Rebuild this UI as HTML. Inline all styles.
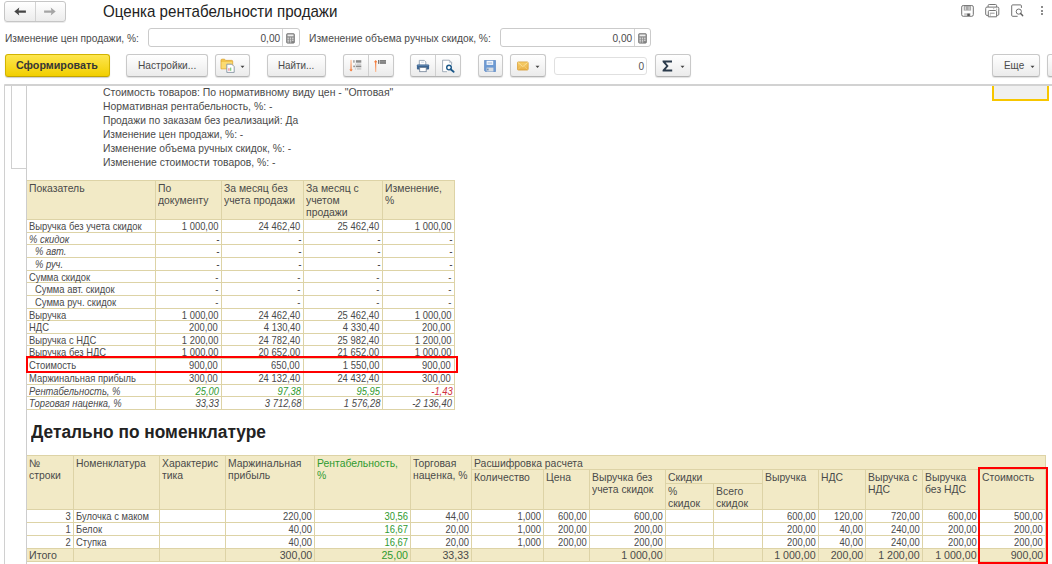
<!DOCTYPE html>
<html><head><meta charset="utf-8"><style>
html,body{margin:0;padding:0;background:#fff;width:1052px;height:564px;overflow:hidden;position:relative;font-family:"Liberation Sans",sans-serif}
.t{position:absolute;white-space:nowrap}
.r{position:absolute}
</style></head><body>
<div class="r" style="left:4px;top:1px;width:62px;height:21px;border:1px solid #c6c6c6;border-radius:3px;background:linear-gradient(#fff,#ececec);box-sizing:border-box;box-shadow:0 1px 0 rgba(0,0,0,0.08)"></div>
<div class="r" style="left:35px;top:2px;width:1px;height:19px;background:#d2d2d2"></div>
<svg class="r" style="left:13px;top:5px" width="14" height="12" viewBox="0 0 14 12"><path d="M1.3 6.6 L6.3 2.6 L5.6 5.5 L12.9 5.5 L12.9 7.7 L5.6 7.7 L6.3 10.6 Z" fill="#454545"/></svg>
<svg class="r" style="left:43px;top:5px" width="14" height="12" viewBox="0 0 14 12"><path d="M12.7 6.6 L7.7 2.6 L8.4 5.5 L1.1 5.5 L1.1 7.7 L8.4 7.7 L7.7 10.6 Z" fill="#a5a5a5"/></svg>
<div class="t" style="left:103px;top:1.05px;font-size:16.6px;line-height:22px;color:#222;font-weight:normal;font-style:normal;transform:scaleX(0.9115);transform-origin:left center;">Оценка рентабельности продажи</div>
<svg class="r" style="left:960px;top:4px" width="15" height="14" viewBox="0 0 15 14">
<rect x="1.7" y="1.5" width="11.6" height="10.8" rx="1.6" fill="none" stroke="#707070" stroke-width="1"/>
<rect x="3.7" y="1.8" width="7.4" height="4.8" fill="#a8a8a8"/>
<rect x="5" y="2.6" width="1" height="3.2" fill="#d8d8d8"/><rect x="8.6" y="2.6" width="1" height="3.2" fill="#d8d8d8"/>
<rect x="4.2" y="9.2" width="6.4" height="3" fill="#c8c8c8"/>
<rect x="7.3" y="9.6" width="2.5" height="2.4" fill="#555"/>
</svg>
<svg class="r" style="left:985px;top:4px" width="15" height="14" viewBox="0 0 15 14">
<path d="M3.1 3 V1.6 Q3.1 0.5 4.2 0.5 H10.5 Q11.6 0.5 11.6 1.6 V3" fill="none" stroke="#747474" stroke-width="1"/>
<path d="M3.3 11.4 H1.9 Q0.7 11.4 0.7 10.2 V4.3 Q0.7 3.1 1.9 3.1 H12.6 Q13.8 3.1 13.8 4.3 V10.2 Q13.8 11.4 12.6 11.4 H11.4" fill="none" stroke="#747474" stroke-width="1"/>
<path d="M3.3 12.8 V7.6 Q3.3 6.5 4.4 6.5 H10.4 Q11.6 6.5 11.6 7.6 V12.8 Z" fill="#fff" stroke="#747474" stroke-width="1"/>
<path d="M5 9.2 H9.6" stroke="#8a8a8a" stroke-width="0.9"/><path d="M5.3 9.2 V12" stroke="#aaa" stroke-width="0.7"/>
<rect x="8.2" y="4.3" width="1" height="0.9" fill="#999"/><rect x="11.1" y="4.7" width="1" height="0.9" fill="#888"/>
</svg>
<svg class="r" style="left:1010px;top:4px" width="15" height="14" viewBox="0 0 15 14">
<path d="M7.6 12.3 H2.7 Q1.7 12.3 1.7 11.3 V1.9 Q1.7 0.9 2.7 0.9 H10.4 Q11.4 0.9 11.4 1.9 V3.9" fill="none" stroke="#707070" stroke-width="1"/>
<circle cx="8.8" cy="7.6" r="2.6" fill="none" stroke="#707070" stroke-width="1"/>
<line x1="10.6" y1="9.5" x2="12.6" y2="11.6" stroke="#606060" stroke-width="1.5" stroke-linecap="round"/>
</svg>
<div class="r" style="left:1041px;top:6px;width:2px;height:2px;background:#666;border-radius:1px"></div>
<div class="r" style="left:1041px;top:9.5px;width:2px;height:2px;background:#666;border-radius:1px"></div>
<div class="r" style="left:1041px;top:13px;width:2px;height:2px;background:#666;border-radius:1px"></div>
<div class="t" style="left:5px;top:31.22px;font-size:10.9px;line-height:14px;color:#4a4a4a;font-weight:normal;font-style:normal;transform:scaleX(0.9354);transform-origin:left center;">Изменение цен продажи, %:</div>
<div class="r" style="left:148px;top:28px;width:152px;height:19px;border:1px solid #cbcbcb;border-radius:3px;background:#fff;box-sizing:border-box"></div>
<div class="r" style="left:282px;top:29px;width:1px;height:17px;background:#d4d4d4"></div>
<svg class="r" style="left:286px;top:33px" width="10" height="11" viewBox="0 0 10 11">
<rect x="0.5" y="0.6" width="8" height="9.6" rx="1.2" fill="#8a8a8a" stroke="#6a6a6a" stroke-width="0.6"/>
<rect x="1.5" y="1.5" width="6" height="1.8" fill="#eeeeee"/>
<g fill="#e6e6e6"><rect x="1.5" y="4.6" width="1.4" height="1.2"/><rect x="3.8" y="4.6" width="1.4" height="1.2"/><rect x="6.1" y="4.6" width="1.4" height="1.2"/>
<rect x="1.5" y="6.6" width="1.4" height="1.2"/><rect x="3.8" y="6.6" width="1.4" height="1.2"/><rect x="6.1" y="6.6" width="1.4" height="1.2"/>
<rect x="1.5" y="8.4" width="1.4" height="1.0"/><rect x="3.8" y="8.4" width="1.4" height="1.0"/></g>
</svg>
<div class="t" style="right:772px;top:31.22px;font-size:10.9px;line-height:14px;color:#4a4a4a;font-weight:normal;font-style:normal;text-align:right;transform:scaleX(0.9300);transform-origin:right center;">0,00</div>
<div class="t" style="left:309px;top:31.22px;font-size:10.9px;line-height:14px;color:#4a4a4a;font-weight:normal;font-style:normal;transform:scaleX(0.9443);transform-origin:left center;">Изменение объема ручных скидок, %:</div>
<div class="r" style="left:500px;top:28px;width:151px;height:19px;border:1px solid #cbcbcb;border-radius:3px;background:#fff;box-sizing:border-box"></div>
<div class="r" style="left:634px;top:29px;width:1px;height:17px;background:#d4d4d4"></div>
<svg class="r" style="left:638px;top:33px" width="10" height="11" viewBox="0 0 10 11">
<rect x="0.5" y="0.6" width="8" height="9.6" rx="1.2" fill="#8a8a8a" stroke="#6a6a6a" stroke-width="0.6"/>
<rect x="1.5" y="1.5" width="6" height="1.8" fill="#eeeeee"/>
<g fill="#e6e6e6"><rect x="1.5" y="4.6" width="1.4" height="1.2"/><rect x="3.8" y="4.6" width="1.4" height="1.2"/><rect x="6.1" y="4.6" width="1.4" height="1.2"/>
<rect x="1.5" y="6.6" width="1.4" height="1.2"/><rect x="3.8" y="6.6" width="1.4" height="1.2"/><rect x="6.1" y="6.6" width="1.4" height="1.2"/>
<rect x="1.5" y="8.4" width="1.4" height="1.0"/><rect x="3.8" y="8.4" width="1.4" height="1.0"/></g>
</svg>
<div class="t" style="right:420px;top:31.22px;font-size:10.9px;line-height:14px;color:#4a4a4a;font-weight:normal;font-style:normal;text-align:right;transform:scaleX(0.9300);transform-origin:right center;">0,00</div>
<div class="r" style="left:5px;top:54px;width:105px;height:23px;border:1px solid #d2b400;border-bottom-color:#c2a400;border-radius:3px;background:linear-gradient(#fde650,#f2cf00);box-sizing:border-box;box-shadow:0 1px 1px rgba(0,0,0,0.2)"></div>
<div class="t" style="left:16px;top:58.22px;font-size:10.9px;line-height:14px;color:#363636;font-weight:bold;font-style:normal;transform:scaleX(0.9852);transform-origin:left center;">Сформировать</div>
<div class="r" style="left:126px;top:54px;width:82px;height:23px;border:1px solid #c9c9c9;border-bottom-color:#b5b5b5;border-radius:3px;background:linear-gradient(#ffffff,#ebebeb);box-sizing:border-box;box-shadow:0 1px 1px rgba(0,0,0,0.12)"></div>
<div class="t" style="left:137.7px;top:58.22px;font-size:10.9px;line-height:14px;color:#4a4a4a;font-weight:normal;font-style:normal;transform:scaleX(0.9324);transform-origin:left center;">Настройки...</div>
<div class="r" style="left:215px;top:54px;width:35px;height:23px;border:1px solid #c9c9c9;border-bottom-color:#b5b5b5;border-radius:3px;background:linear-gradient(#ffffff,#ebebeb);box-sizing:border-box;box-shadow:0 1px 1px rgba(0,0,0,0.12)"></div>
<svg class="r" style="left:220px;top:58px" width="16" height="16" viewBox="0 0 16 16">
<path d="M1 2.2 Q1 1.2 2 1.2 H4.6 L5.6 2.4 H11.8 Q12.7 2.4 12.7 3.3 V10.8 H1 Z" fill="#f3c54a" stroke="#dca22e" stroke-width="0.8"/>
<rect x="1.5" y="4" width="10.7" height="6.4" fill="#fbdb73"/>
<path d="M6.8 6.2 H11.8 L14.2 8.6 V14.4 H6.8 Z" fill="#fff" stroke="#8593a3" stroke-width="0.9"/>
<rect x="8.3" y="10.2" width="1.3" height="2.6" fill="#f28c8c"/><rect x="10" y="9.6" width="1.3" height="3.2" fill="#86cf86"/>
</svg>
<svg class="r" style="left:240px;top:64.5px" width="5" height="4" viewBox="0 0 5 4"><path d="M0.5 0.8 H4.5 L2.5 2.9 Z" fill="#444"/></svg>
<div class="r" style="left:267px;top:54px;width:59px;height:23px;border:1px solid #c9c9c9;border-bottom-color:#b5b5b5;border-radius:3px;background:linear-gradient(#ffffff,#ebebeb);box-sizing:border-box;box-shadow:0 1px 1px rgba(0,0,0,0.12)"></div>
<div class="t" style="left:278.4px;top:58.22px;font-size:10.9px;line-height:14px;color:#4a4a4a;font-weight:normal;font-style:normal;transform:scaleX(0.9008);transform-origin:left center;">Найти...</div>
<div class="r" style="left:343px;top:54px;width:51px;height:23px;border:1px solid #c9c9c9;border-bottom-color:#b5b5b5;border-radius:3px;background:linear-gradient(#ffffff,#ebebeb);box-sizing:border-box;box-shadow:0 1px 1px rgba(0,0,0,0.12)"></div>
<div class="r" style="left:368px;top:55px;width:1px;height:21px;background:#cfcfcf"></div>
<svg class="r" style="left:346px;top:57px" width="18" height="17" viewBox="0 0 18 17">
<defs><linearGradient id="og1" x1="0" y1="0" x2="0" y2="1"><stop offset="0" stop-color="#fbc9a8"/><stop offset="1" stop-color="#f37d3e"/></linearGradient>
<linearGradient id="og2" x1="0" y1="1" x2="0" y2="0"><stop offset="0" stop-color="#fbc2a0"/><stop offset="1" stop-color="#f37d3e"/></linearGradient></defs>
<rect x="4.4" y="2.9" width="1.3" height="10.5" fill="url(#og1)"/>
<path d="M3.3 12.4 H6.8 L5.05 14.6 Z" fill="#f37a38"/>
<rect x="7.2" y="3.2" width="1.4" height="2.5" fill="#9a9a9a"/><rect x="9.9" y="3.2" width="5.4" height="2.5" fill="#8a8a8a"/>
<rect x="9.3" y="6.4" width="0.6" height="1.9" fill="#bbb"/><rect x="10.5" y="6.4" width="4.8" height="1.9" fill="#cfcfcf"/>
<rect x="7.2" y="8.6" width="2" height="1.6" fill="#999"/><rect x="9.9" y="8.6" width="5.4" height="1.6" fill="#8a8a8a"/>
<rect x="8.9" y="10.5" width="0.6" height="2.3" fill="#bbb"/><rect x="10.8" y="10.5" width="4.5" height="2.3" fill="#cfcfcf"/>
</svg>
<svg class="r" style="left:371px;top:57px" width="18" height="17" viewBox="0 0 18 17">
<rect x="4" y="4.5" width="1.3" height="10.5" fill="url(#og2)"/>
<path d="M2.9 5.3 H6.4 L4.65 3 Z" fill="#f37a38"/>
<rect x="7" y="3" width="1" height="3.9" fill="#777"/><rect x="8.6" y="3" width="6.4" height="3.9" fill="#7e7e7e"/>
<rect x="8.6" y="4.6" width="6.4" height="0.6" fill="#a5a5a5"/>
</svg>
<div class="r" style="left:410px;top:54px;width:51px;height:23px;border:1px solid #c9c9c9;border-bottom-color:#b5b5b5;border-radius:3px;background:linear-gradient(#ffffff,#ebebeb);box-sizing:border-box;box-shadow:0 1px 1px rgba(0,0,0,0.12)"></div>
<div class="r" style="left:435px;top:55px;width:1px;height:21px;background:#cfcfcf"></div>
<svg class="r" style="left:416px;top:59px" width="14" height="14" viewBox="0 0 14 14">
<path d="M3.3 6 V1.4 H8.3 L9.8 2.9 V6" fill="#fff" stroke="#8595a8" stroke-width="0.8"/>
<path d="M5 3.2 H8" stroke="#b8c8dc" stroke-width="0.7"/>
<path d="M0.9 6.3 Q0.9 5.5 1.8 5.5 H12.2 Q13.1 5.5 13.1 6.3 V9.6 Q13.1 10.6 12.1 10.6 H1.9 Q0.9 10.6 0.9 9.6 Z" fill="#3c6592"/>
<rect x="1.5" y="5.9" width="11" height="1" fill="#5a82ad"/>
<rect x="3.7" y="8.6" width="6.5" height="4.1" fill="#fff" stroke="#6e7f94" stroke-width="0.8"/>
</svg>
<svg class="r" style="left:441px;top:59px" width="14" height="14" viewBox="0 0 14 14">
<path d="M6 12.7 H1.6 V1.2 H8.4 L10.6 3.4 V5.8" fill="#fff" stroke="#8a98a8" stroke-width="0.8"/>
<path d="M8.4 1.2 V3.4 H10.6" fill="none" stroke="#9aa8b8" stroke-width="0.6"/>
<circle cx="8" cy="8.6" r="2.3" fill="#fff" stroke="#1b5889" stroke-width="1.4"/>
<line x1="9.6" y1="10.2" x2="12.6" y2="12.8" stroke="#1b5889" stroke-width="1.8" stroke-linecap="round"/>
</svg>
<div class="r" style="left:478px;top:54px;width:25px;height:23px;border:1px solid #c9c9c9;border-bottom-color:#b5b5b5;border-radius:3px;background:linear-gradient(#ffffff,#ebebeb);box-sizing:border-box;box-shadow:0 1px 1px rgba(0,0,0,0.12)"></div>
<svg class="r" style="left:484px;top:60px" width="12" height="12" viewBox="0 0 12 12">
<path d="M0.4 0.6 Q0.4 0.3 0.7 0.3 H11.3 Q11.7 0.3 11.7 0.7 V11.3 Q11.7 11.7 11.3 11.7 H1.6 L0.4 10.5 Z" fill="#6d9ad3" stroke="#5682bd" stroke-width="0.6"/>
<rect x="2.6" y="0.8" width="6.6" height="4.1" fill="#f4f7fc"/>
<rect x="3.6" y="2.0" width="4.6" height="0.6" fill="#a9bedc"/><rect x="3.6" y="3.2" width="4.6" height="0.6" fill="#a9bedc"/>
<rect x="2.6" y="7.6" width="6.8" height="3.9" fill="#d9dde2"/>
<rect x="3.2" y="8.6" width="1.3" height="1.8" fill="#5a7fae"/>
</svg>
<div class="r" style="left:510px;top:54px;width:36px;height:23px;border:1px solid #c9c9c9;border-bottom-color:#b5b5b5;border-radius:3px;background:linear-gradient(#ffffff,#ebebeb);box-sizing:border-box;box-shadow:0 1px 1px rgba(0,0,0,0.12)"></div>
<svg class="r" style="left:517px;top:61px" width="12" height="10" viewBox="0 0 12 10">
<defs><linearGradient id="env" x1="0" y1="0" x2="0" y2="1"><stop offset="0" stop-color="#f7cf6a"/><stop offset="1" stop-color="#eab045"/></linearGradient></defs>
<rect x="0.4" y="0.9" width="10.8" height="8.2" rx="1" fill="url(#env)" stroke="#d69a2c" stroke-width="0.7"/>
<path d="M0.8 1.4 L5.8 5.6 L10.8 1.4" fill="none" stroke="#fbe3a0" stroke-width="0.8"/>
<path d="M0.9 8.6 L4.3 5.2 M10.7 8.6 L7.3 5.2" fill="none" stroke="#f5d488" stroke-width="0.6"/>
</svg>
<svg class="r" style="left:535px;top:64.5px" width="5" height="4" viewBox="0 0 5 4"><path d="M0.5 0.8 H4.5 L2.5 2.9 Z" fill="#444"/></svg>
<div class="r" style="left:554px;top:57px;width:93px;height:18px;border:1px solid #e0e0e0;border-radius:3px;background:#fff;box-sizing:border-box"></div>
<div class="t" style="right:408px;top:59.02px;font-size:10.9px;line-height:14px;color:#555;font-weight:normal;font-style:normal;text-align:right;transform:scaleX(0.9300);transform-origin:right center;">0</div>
<div class="r" style="left:655px;top:54px;width:36px;height:23px;border:1px solid #c9c9c9;border-bottom-color:#b5b5b5;border-radius:3px;background:linear-gradient(#ffffff,#ebebeb);box-sizing:border-box;box-shadow:0 1px 1px rgba(0,0,0,0.12)"></div>
<svg class="r" style="left:662px;top:60px" width="11" height="12" viewBox="0 0 11 12">
<path d="M0.6 0.6 H10 V2.6 H3.6 L6.6 6 L3.6 9.4 H10.2 V11.4 H0.6 V10 L4.2 6 L0.6 2 Z" fill="#2b3b4b"/>
</svg>
<svg class="r" style="left:680px;top:64.5px" width="5" height="4" viewBox="0 0 5 4"><path d="M0.5 0.8 H4.5 L2.5 2.9 Z" fill="#444"/></svg>
<div class="r" style="left:992px;top:54px;width:48px;height:23px;border:1px solid #c9c9c9;border-bottom-color:#b5b5b5;border-radius:3px;background:linear-gradient(#ffffff,#ebebeb);box-sizing:border-box;box-shadow:0 1px 1px rgba(0,0,0,0.12)"></div>
<div class="t" style="left:1003.8px;top:58.22px;font-size:10.9px;line-height:14px;color:#4a4a4a;font-weight:normal;font-style:normal;transform:scaleX(0.9108);transform-origin:left center;">Еще</div>
<svg class="r" style="left:1030px;top:64.5px" width="5" height="4" viewBox="0 0 5 4"><path d="M0.5 0.8 H4.5 L2.5 2.9 Z" fill="#444"/></svg>
<div class="r" style="left:1047px;top:54px;width:10px;height:23px;border:1px solid #c9c9c9;border-bottom-color:#b5b5b5;border-radius:3px;background:linear-gradient(#ffffff,#ebebeb);box-sizing:border-box;box-shadow:0 1px 1px rgba(0,0,0,0.12)"></div>
<div class="r" style="left:4px;top:84px;width:1060px;height:2px;background:#d2d2d2;border-top-left-radius:1px"></div>
<div class="r" style="left:4px;top:86px;width:1px;height:478px;background:#d0d0d0"></div>
<div class="r" style="left:11px;top:86px;width:1px;height:83px;background:#d0d0d0"></div>
<div class="r" style="left:11px;top:168px;width:15px;height:1px;background:#d0d0d0"></div>
<div class="r" style="left:992px;top:86px;width:57px;height:15px;border:2px solid #f7c600;border-top:none;background:#f0f0f0;box-sizing:border-box"></div>
<div class="t" style="left:102.5px;top:85.22px;font-size:10.9px;line-height:14px;color:#4a4a4a;font-weight:normal;font-style:normal;transform:scaleX(0.9589);transform-origin:left center;">Стоимость товаров: По нормативному виду цен - "Оптовая"</div>
<div class="t" style="left:102.5px;top:99.17px;font-size:10.9px;line-height:14px;color:#4a4a4a;font-weight:normal;font-style:normal;transform:scaleX(0.9535);transform-origin:left center;">Нормативная рентабельность, %: -</div>
<div class="t" style="left:102.5px;top:113.12px;font-size:10.9px;line-height:14px;color:#4a4a4a;font-weight:normal;font-style:normal;transform:scaleX(0.9448);transform-origin:left center;">Продажи по заказам без реализаций: Да</div>
<div class="t" style="left:102.5px;top:127.07px;font-size:10.9px;line-height:14px;color:#4a4a4a;font-weight:normal;font-style:normal;transform:scaleX(0.9359);transform-origin:left center;">Изменение цен продажи, %: -</div>
<div class="t" style="left:102.5px;top:141.02px;font-size:10.9px;line-height:14px;color:#4a4a4a;font-weight:normal;font-style:normal;transform:scaleX(0.9439);transform-origin:left center;">Изменение объема ручных скидок, %: -</div>
<div class="t" style="left:102.5px;top:154.97px;font-size:10.9px;line-height:14px;color:#4a4a4a;font-weight:normal;font-style:normal;transform:scaleX(0.9522);transform-origin:left center;">Изменение стоимости товаров, %: -</div>
<div class="r" style="left:26px;top:180px;width:428px;height:39px;background:#f2eac6"></div>
<div class="r" style="left:26px;top:180px;width:429px;height:1px;background:#ddd3a6"></div>
<div class="r" style="left:26px;top:219px;width:429px;height:1px;background:#ddd3a6"></div>
<div class="r" style="left:26px;top:232px;width:429px;height:1px;background:#ddd3a6"></div>
<div class="r" style="left:26px;top:244px;width:429px;height:1px;background:#ddd3a6"></div>
<div class="r" style="left:26px;top:257px;width:429px;height:1px;background:#ddd3a6"></div>
<div class="r" style="left:26px;top:270px;width:429px;height:1px;background:#ddd3a6"></div>
<div class="r" style="left:26px;top:282px;width:429px;height:1px;background:#ddd3a6"></div>
<div class="r" style="left:26px;top:295px;width:429px;height:1px;background:#ddd3a6"></div>
<div class="r" style="left:26px;top:308px;width:429px;height:1px;background:#ddd3a6"></div>
<div class="r" style="left:26px;top:320px;width:429px;height:1px;background:#ddd3a6"></div>
<div class="r" style="left:26px;top:333px;width:429px;height:1px;background:#ddd3a6"></div>
<div class="r" style="left:26px;top:345px;width:429px;height:1px;background:#ddd3a6"></div>
<div class="r" style="left:26px;top:358px;width:429px;height:1px;background:#ddd3a6"></div>
<div class="r" style="left:26px;top:371px;width:429px;height:1px;background:#ddd3a6"></div>
<div class="r" style="left:26px;top:384px;width:429px;height:1px;background:#ddd3a6"></div>
<div class="r" style="left:26px;top:396px;width:429px;height:1px;background:#ddd3a6"></div>
<div class="r" style="left:26px;top:409px;width:429px;height:1px;background:#ddd3a6"></div>
<div class="r" style="left:26px;top:180px;width:1px;height:230px;background:#ddd3a6"></div>
<div class="r" style="left:155px;top:180px;width:1px;height:230px;background:#ddd3a6"></div>
<div class="r" style="left:221px;top:180px;width:1px;height:230px;background:#ddd3a6"></div>
<div class="r" style="left:303px;top:180px;width:1px;height:230px;background:#ddd3a6"></div>
<div class="r" style="left:382px;top:180px;width:1px;height:230px;background:#ddd3a6"></div>
<div class="r" style="left:454px;top:180px;width:1px;height:230px;background:#ddd3a6"></div>
<div class="t" style="left:29px;top:180.82px;font-size:10.9px;line-height:14px;color:#4a4a4a;font-weight:normal;font-style:normal;transform:scaleX(0.9550);transform-origin:left center;">Показатель</div>
<div class="t" style="left:158px;top:180.82px;font-size:10.9px;line-height:14px;color:#4a4a4a;font-weight:normal;font-style:normal;transform:scaleX(0.9550);transform-origin:left center;">По</div>
<div class="t" style="left:158px;top:192.72px;font-size:10.9px;line-height:14px;color:#4a4a4a;font-weight:normal;font-style:normal;transform:scaleX(0.9550);transform-origin:left center;">документу</div>
<div class="t" style="left:224px;top:180.82px;font-size:10.9px;line-height:14px;color:#4a4a4a;font-weight:normal;font-style:normal;transform:scaleX(0.9550);transform-origin:left center;">За месяц без</div>
<div class="t" style="left:224px;top:192.72px;font-size:10.9px;line-height:14px;color:#4a4a4a;font-weight:normal;font-style:normal;transform:scaleX(0.9550);transform-origin:left center;">учета продажи</div>
<div class="t" style="left:306px;top:180.82px;font-size:10.9px;line-height:14px;color:#4a4a4a;font-weight:normal;font-style:normal;transform:scaleX(0.9550);transform-origin:left center;">За месяц с</div>
<div class="t" style="left:306px;top:192.72px;font-size:10.9px;line-height:14px;color:#4a4a4a;font-weight:normal;font-style:normal;transform:scaleX(0.9550);transform-origin:left center;">учетом</div>
<div class="t" style="left:306px;top:204.62px;font-size:10.9px;line-height:14px;color:#4a4a4a;font-weight:normal;font-style:normal;transform:scaleX(0.9550);transform-origin:left center;">продажи</div>
<div class="t" style="left:385px;top:180.82px;font-size:10.9px;line-height:14px;color:#4a4a4a;font-weight:normal;font-style:normal;transform:scaleX(0.9550);transform-origin:left center;">Изменение,</div>
<div class="t" style="left:385px;top:192.72px;font-size:10.9px;line-height:14px;color:#4a4a4a;font-weight:normal;font-style:normal;transform:scaleX(0.9550);transform-origin:left center;">%</div>
<div class="t" style="left:29px;top:219.60px;font-size:10.4px;line-height:14px;color:#4a4a4a;font-weight:normal;font-style:normal;transform:scaleX(0.9050);transform-origin:left center;">Выручка без учета скидок</div>
<div class="t" style="right:834px;top:219.60px;font-size:10.4px;line-height:14px;color:#4a4a4a;font-weight:normal;font-style:normal;text-align:right;transform:scaleX(0.9050);transform-origin:right center;">1 000,00</div>
<div class="t" style="right:752px;top:219.60px;font-size:10.4px;line-height:14px;color:#4a4a4a;font-weight:normal;font-style:normal;text-align:right;transform:scaleX(0.9050);transform-origin:right center;">24 462,40</div>
<div class="t" style="right:673px;top:219.60px;font-size:10.4px;line-height:14px;color:#4a4a4a;font-weight:normal;font-style:normal;text-align:right;transform:scaleX(0.9050);transform-origin:right center;">25 462,40</div>
<div class="t" style="right:601px;top:219.60px;font-size:10.4px;line-height:14px;color:#4a4a4a;font-weight:normal;font-style:normal;text-align:right;transform:scaleX(0.9050);transform-origin:right center;">1 000,00</div>
<div class="t" style="left:29px;top:232.60px;font-size:10.4px;line-height:14px;color:#4a4a4a;font-weight:normal;font-style:italic;transform:scaleX(0.9050);transform-origin:left center;">% скидок</div>
<div class="t" style="right:832.8px;top:232.60px;font-size:10.4px;line-height:14px;color:#4a4a4a;font-weight:normal;font-style:italic;text-align:right;transform:scaleX(0.9050);transform-origin:right center;">-</div>
<div class="t" style="right:750.8px;top:232.60px;font-size:10.4px;line-height:14px;color:#4a4a4a;font-weight:normal;font-style:italic;text-align:right;transform:scaleX(0.9050);transform-origin:right center;">-</div>
<div class="t" style="right:671.8px;top:232.60px;font-size:10.4px;line-height:14px;color:#4a4a4a;font-weight:normal;font-style:italic;text-align:right;transform:scaleX(0.9050);transform-origin:right center;">-</div>
<div class="t" style="right:599.8px;top:232.60px;font-size:10.4px;line-height:14px;color:#4a4a4a;font-weight:normal;font-style:italic;text-align:right;transform:scaleX(0.9050);transform-origin:right center;">-</div>
<div class="t" style="left:35px;top:244.60px;font-size:10.4px;line-height:14px;color:#4a4a4a;font-weight:normal;font-style:italic;transform:scaleX(0.9050);transform-origin:left center;">% авт.</div>
<div class="t" style="right:832.8px;top:244.60px;font-size:10.4px;line-height:14px;color:#4a4a4a;font-weight:normal;font-style:italic;text-align:right;transform:scaleX(0.9050);transform-origin:right center;">-</div>
<div class="t" style="right:750.8px;top:244.60px;font-size:10.4px;line-height:14px;color:#4a4a4a;font-weight:normal;font-style:italic;text-align:right;transform:scaleX(0.9050);transform-origin:right center;">-</div>
<div class="t" style="right:671.8px;top:244.60px;font-size:10.4px;line-height:14px;color:#4a4a4a;font-weight:normal;font-style:italic;text-align:right;transform:scaleX(0.9050);transform-origin:right center;">-</div>
<div class="t" style="right:599.8px;top:244.60px;font-size:10.4px;line-height:14px;color:#4a4a4a;font-weight:normal;font-style:italic;text-align:right;transform:scaleX(0.9050);transform-origin:right center;">-</div>
<div class="t" style="left:35px;top:257.60px;font-size:10.4px;line-height:14px;color:#4a4a4a;font-weight:normal;font-style:italic;transform:scaleX(0.9050);transform-origin:left center;">% руч.</div>
<div class="t" style="right:832.8px;top:257.60px;font-size:10.4px;line-height:14px;color:#4a4a4a;font-weight:normal;font-style:italic;text-align:right;transform:scaleX(0.9050);transform-origin:right center;">-</div>
<div class="t" style="right:750.8px;top:257.60px;font-size:10.4px;line-height:14px;color:#4a4a4a;font-weight:normal;font-style:italic;text-align:right;transform:scaleX(0.9050);transform-origin:right center;">-</div>
<div class="t" style="right:671.8px;top:257.60px;font-size:10.4px;line-height:14px;color:#4a4a4a;font-weight:normal;font-style:italic;text-align:right;transform:scaleX(0.9050);transform-origin:right center;">-</div>
<div class="t" style="right:599.8px;top:257.60px;font-size:10.4px;line-height:14px;color:#4a4a4a;font-weight:normal;font-style:italic;text-align:right;transform:scaleX(0.9050);transform-origin:right center;">-</div>
<div class="t" style="left:29px;top:270.60px;font-size:10.4px;line-height:14px;color:#4a4a4a;font-weight:normal;font-style:normal;transform:scaleX(0.9050);transform-origin:left center;">Сумма скидок</div>
<div class="t" style="right:834px;top:270.60px;font-size:10.4px;line-height:14px;color:#4a4a4a;font-weight:normal;font-style:normal;text-align:right;transform:scaleX(0.9050);transform-origin:right center;">-</div>
<div class="t" style="right:752px;top:270.60px;font-size:10.4px;line-height:14px;color:#4a4a4a;font-weight:normal;font-style:normal;text-align:right;transform:scaleX(0.9050);transform-origin:right center;">-</div>
<div class="t" style="right:673px;top:270.60px;font-size:10.4px;line-height:14px;color:#4a4a4a;font-weight:normal;font-style:normal;text-align:right;transform:scaleX(0.9050);transform-origin:right center;">-</div>
<div class="t" style="right:601px;top:270.60px;font-size:10.4px;line-height:14px;color:#4a4a4a;font-weight:normal;font-style:normal;text-align:right;transform:scaleX(0.9050);transform-origin:right center;">-</div>
<div class="t" style="left:35px;top:282.60px;font-size:10.4px;line-height:14px;color:#4a4a4a;font-weight:normal;font-style:normal;transform:scaleX(0.9050);transform-origin:left center;">Сумма авт. скидок</div>
<div class="t" style="right:834px;top:282.60px;font-size:10.4px;line-height:14px;color:#4a4a4a;font-weight:normal;font-style:normal;text-align:right;transform:scaleX(0.9050);transform-origin:right center;">-</div>
<div class="t" style="right:752px;top:282.60px;font-size:10.4px;line-height:14px;color:#4a4a4a;font-weight:normal;font-style:normal;text-align:right;transform:scaleX(0.9050);transform-origin:right center;">-</div>
<div class="t" style="right:673px;top:282.60px;font-size:10.4px;line-height:14px;color:#4a4a4a;font-weight:normal;font-style:normal;text-align:right;transform:scaleX(0.9050);transform-origin:right center;">-</div>
<div class="t" style="right:601px;top:282.60px;font-size:10.4px;line-height:14px;color:#4a4a4a;font-weight:normal;font-style:normal;text-align:right;transform:scaleX(0.9050);transform-origin:right center;">-</div>
<div class="t" style="left:35px;top:295.60px;font-size:10.4px;line-height:14px;color:#4a4a4a;font-weight:normal;font-style:normal;transform:scaleX(0.9050);transform-origin:left center;">Сумма руч. скидок</div>
<div class="t" style="right:834px;top:295.60px;font-size:10.4px;line-height:14px;color:#4a4a4a;font-weight:normal;font-style:normal;text-align:right;transform:scaleX(0.9050);transform-origin:right center;">-</div>
<div class="t" style="right:752px;top:295.60px;font-size:10.4px;line-height:14px;color:#4a4a4a;font-weight:normal;font-style:normal;text-align:right;transform:scaleX(0.9050);transform-origin:right center;">-</div>
<div class="t" style="right:673px;top:295.60px;font-size:10.4px;line-height:14px;color:#4a4a4a;font-weight:normal;font-style:normal;text-align:right;transform:scaleX(0.9050);transform-origin:right center;">-</div>
<div class="t" style="right:601px;top:295.60px;font-size:10.4px;line-height:14px;color:#4a4a4a;font-weight:normal;font-style:normal;text-align:right;transform:scaleX(0.9050);transform-origin:right center;">-</div>
<div class="t" style="left:29px;top:308.60px;font-size:10.4px;line-height:14px;color:#4a4a4a;font-weight:normal;font-style:normal;transform:scaleX(0.9050);transform-origin:left center;">Выручка</div>
<div class="t" style="right:834px;top:308.60px;font-size:10.4px;line-height:14px;color:#4a4a4a;font-weight:normal;font-style:normal;text-align:right;transform:scaleX(0.9050);transform-origin:right center;">1 000,00</div>
<div class="t" style="right:752px;top:308.60px;font-size:10.4px;line-height:14px;color:#4a4a4a;font-weight:normal;font-style:normal;text-align:right;transform:scaleX(0.9050);transform-origin:right center;">24 462,40</div>
<div class="t" style="right:673px;top:308.60px;font-size:10.4px;line-height:14px;color:#4a4a4a;font-weight:normal;font-style:normal;text-align:right;transform:scaleX(0.9050);transform-origin:right center;">25 462,40</div>
<div class="t" style="right:601px;top:308.60px;font-size:10.4px;line-height:14px;color:#4a4a4a;font-weight:normal;font-style:normal;text-align:right;transform:scaleX(0.9050);transform-origin:right center;">1 000,00</div>
<div class="t" style="left:29px;top:320.60px;font-size:10.4px;line-height:14px;color:#4a4a4a;font-weight:normal;font-style:normal;transform:scaleX(0.9050);transform-origin:left center;">НДС</div>
<div class="t" style="right:834px;top:320.60px;font-size:10.4px;line-height:14px;color:#4a4a4a;font-weight:normal;font-style:normal;text-align:right;transform:scaleX(0.9050);transform-origin:right center;">200,00</div>
<div class="t" style="right:752px;top:320.60px;font-size:10.4px;line-height:14px;color:#4a4a4a;font-weight:normal;font-style:normal;text-align:right;transform:scaleX(0.9050);transform-origin:right center;">4 130,40</div>
<div class="t" style="right:673px;top:320.60px;font-size:10.4px;line-height:14px;color:#4a4a4a;font-weight:normal;font-style:normal;text-align:right;transform:scaleX(0.9050);transform-origin:right center;">4 330,40</div>
<div class="t" style="right:601px;top:320.60px;font-size:10.4px;line-height:14px;color:#4a4a4a;font-weight:normal;font-style:normal;text-align:right;transform:scaleX(0.9050);transform-origin:right center;">200,00</div>
<div class="t" style="left:29px;top:333.60px;font-size:10.4px;line-height:14px;color:#4a4a4a;font-weight:normal;font-style:normal;transform:scaleX(0.9050);transform-origin:left center;">Выручка с НДС</div>
<div class="t" style="right:834px;top:333.60px;font-size:10.4px;line-height:14px;color:#4a4a4a;font-weight:normal;font-style:normal;text-align:right;transform:scaleX(0.9050);transform-origin:right center;">1 200,00</div>
<div class="t" style="right:752px;top:333.60px;font-size:10.4px;line-height:14px;color:#4a4a4a;font-weight:normal;font-style:normal;text-align:right;transform:scaleX(0.9050);transform-origin:right center;">24 782,40</div>
<div class="t" style="right:673px;top:333.60px;font-size:10.4px;line-height:14px;color:#4a4a4a;font-weight:normal;font-style:normal;text-align:right;transform:scaleX(0.9050);transform-origin:right center;">25 982,40</div>
<div class="t" style="right:601px;top:333.60px;font-size:10.4px;line-height:14px;color:#4a4a4a;font-weight:normal;font-style:normal;text-align:right;transform:scaleX(0.9050);transform-origin:right center;">1 200,00</div>
<div class="t" style="left:29px;top:345.60px;font-size:10.4px;line-height:14px;color:#4a4a4a;font-weight:normal;font-style:normal;transform:scaleX(0.9050);transform-origin:left center;">Выручка без НДС</div>
<div class="t" style="right:834px;top:345.60px;font-size:10.4px;line-height:14px;color:#4a4a4a;font-weight:normal;font-style:normal;text-align:right;transform:scaleX(0.9050);transform-origin:right center;">1 000,00</div>
<div class="t" style="right:752px;top:345.60px;font-size:10.4px;line-height:14px;color:#4a4a4a;font-weight:normal;font-style:normal;text-align:right;transform:scaleX(0.9050);transform-origin:right center;">20 652,00</div>
<div class="t" style="right:673px;top:345.60px;font-size:10.4px;line-height:14px;color:#4a4a4a;font-weight:normal;font-style:normal;text-align:right;transform:scaleX(0.9050);transform-origin:right center;">21 652,00</div>
<div class="t" style="right:601px;top:345.60px;font-size:10.4px;line-height:14px;color:#4a4a4a;font-weight:normal;font-style:normal;text-align:right;transform:scaleX(0.9050);transform-origin:right center;">1 000,00</div>
<div class="t" style="left:29px;top:358.60px;font-size:10.4px;line-height:14px;color:#4a4a4a;font-weight:normal;font-style:normal;transform:scaleX(0.9050);transform-origin:left center;">Стоимость</div>
<div class="t" style="right:834px;top:358.60px;font-size:10.4px;line-height:14px;color:#4a4a4a;font-weight:normal;font-style:normal;text-align:right;transform:scaleX(0.9050);transform-origin:right center;">900,00</div>
<div class="t" style="right:752px;top:358.60px;font-size:10.4px;line-height:14px;color:#4a4a4a;font-weight:normal;font-style:normal;text-align:right;transform:scaleX(0.9050);transform-origin:right center;">650,00</div>
<div class="t" style="right:673px;top:358.60px;font-size:10.4px;line-height:14px;color:#4a4a4a;font-weight:normal;font-style:normal;text-align:right;transform:scaleX(0.9050);transform-origin:right center;">1 550,00</div>
<div class="t" style="right:601px;top:358.60px;font-size:10.4px;line-height:14px;color:#4a4a4a;font-weight:normal;font-style:normal;text-align:right;transform:scaleX(0.9050);transform-origin:right center;">900,00</div>
<div class="t" style="left:29px;top:371.60px;font-size:10.4px;line-height:14px;color:#4a4a4a;font-weight:normal;font-style:normal;transform:scaleX(0.9050);transform-origin:left center;">Маржинальная прибыль</div>
<div class="t" style="right:834px;top:371.60px;font-size:10.4px;line-height:14px;color:#4a4a4a;font-weight:normal;font-style:normal;text-align:right;transform:scaleX(0.9050);transform-origin:right center;">300,00</div>
<div class="t" style="right:752px;top:371.60px;font-size:10.4px;line-height:14px;color:#4a4a4a;font-weight:normal;font-style:normal;text-align:right;transform:scaleX(0.9050);transform-origin:right center;">24 132,40</div>
<div class="t" style="right:673px;top:371.60px;font-size:10.4px;line-height:14px;color:#4a4a4a;font-weight:normal;font-style:normal;text-align:right;transform:scaleX(0.9050);transform-origin:right center;">24 432,40</div>
<div class="t" style="right:601px;top:371.60px;font-size:10.4px;line-height:14px;color:#4a4a4a;font-weight:normal;font-style:normal;text-align:right;transform:scaleX(0.9050);transform-origin:right center;">300,00</div>
<div class="t" style="left:29px;top:384.60px;font-size:10.4px;line-height:14px;color:#4a4a4a;font-weight:normal;font-style:italic;transform:scaleX(0.9050);transform-origin:left center;">Рентабельность, %</div>
<div class="t" style="right:832.8px;top:384.60px;font-size:10.4px;line-height:14px;color:#2f9a2f;font-weight:normal;font-style:italic;text-align:right;transform:scaleX(0.9050);transform-origin:right center;">25,00</div>
<div class="t" style="right:750.8px;top:384.60px;font-size:10.4px;line-height:14px;color:#2f9a2f;font-weight:normal;font-style:italic;text-align:right;transform:scaleX(0.9050);transform-origin:right center;">97,38</div>
<div class="t" style="right:671.8px;top:384.60px;font-size:10.4px;line-height:14px;color:#2f9a2f;font-weight:normal;font-style:italic;text-align:right;transform:scaleX(0.9050);transform-origin:right center;">95,95</div>
<div class="t" style="right:599.8px;top:384.60px;font-size:10.4px;line-height:14px;color:#d2303c;font-weight:normal;font-style:italic;text-align:right;transform:scaleX(0.9050);transform-origin:right center;">-1,43</div>
<div class="t" style="left:29px;top:396.60px;font-size:10.4px;line-height:14px;color:#4a4a4a;font-weight:normal;font-style:italic;transform:scaleX(0.9050);transform-origin:left center;">Торговая наценка, %</div>
<div class="t" style="right:832.8px;top:396.60px;font-size:10.4px;line-height:14px;color:#4a4a4a;font-weight:normal;font-style:italic;text-align:right;transform:scaleX(0.9050);transform-origin:right center;">33,33</div>
<div class="t" style="right:750.8px;top:396.60px;font-size:10.4px;line-height:14px;color:#4a4a4a;font-weight:normal;font-style:italic;text-align:right;transform:scaleX(0.9050);transform-origin:right center;">3 712,68</div>
<div class="t" style="right:671.8px;top:396.60px;font-size:10.4px;line-height:14px;color:#4a4a4a;font-weight:normal;font-style:italic;text-align:right;transform:scaleX(0.9050);transform-origin:right center;">1 576,28</div>
<div class="t" style="right:599.8px;top:396.60px;font-size:10.4px;line-height:14px;color:#4a4a4a;font-weight:normal;font-style:italic;text-align:right;transform:scaleX(0.9050);transform-origin:right center;">-2 136,40</div>
<div class="t" style="left:30.5px;top:421.20px;font-size:17.6px;line-height:23px;color:#222;font-weight:bold;font-style:normal;transform:scaleX(0.9833);transform-origin:left center;">Детально по номенклатуре</div>
<div class="r" style="left:26px;top:455px;width:1019px;height:54px;background:#f2eac6"></div>
<div class="r" style="left:26px;top:548px;width:1019px;height:13px;background:#f2eac6"></div>
<div class="r" style="left:26px;top:455px;width:1020px;height:1px;background:#ddd3a6"></div>
<div class="r" style="left:471px;top:469px;width:575px;height:1px;background:#ddd3a6"></div>
<div class="r" style="left:665px;top:483px;width:98px;height:1px;background:#ddd3a6"></div>
<div class="r" style="left:26px;top:509px;width:1020px;height:1px;background:#ddd3a6"></div>
<div class="r" style="left:26px;top:522px;width:1020px;height:1px;background:#ddd3a6"></div>
<div class="r" style="left:26px;top:535px;width:1020px;height:1px;background:#ddd3a6"></div>
<div class="r" style="left:26px;top:548px;width:1020px;height:1px;background:#ddd3a6"></div>
<div class="r" style="left:26px;top:561px;width:1020px;height:1px;background:#ddd3a6"></div>
<div class="r" style="left:26px;top:455px;width:1px;height:107px;background:#ddd3a6"></div>
<div class="r" style="left:73px;top:455px;width:1px;height:107px;background:#ddd3a6"></div>
<div class="r" style="left:159px;top:455px;width:1px;height:107px;background:#ddd3a6"></div>
<div class="r" style="left:225px;top:455px;width:1px;height:107px;background:#ddd3a6"></div>
<div class="r" style="left:314px;top:455px;width:1px;height:107px;background:#ddd3a6"></div>
<div class="r" style="left:410px;top:455px;width:1px;height:107px;background:#ddd3a6"></div>
<div class="r" style="left:471px;top:455px;width:1px;height:107px;background:#ddd3a6"></div>
<div class="r" style="left:543px;top:469px;width:1px;height:93px;background:#ddd3a6"></div>
<div class="r" style="left:589px;top:469px;width:1px;height:93px;background:#ddd3a6"></div>
<div class="r" style="left:665px;top:469px;width:1px;height:93px;background:#ddd3a6"></div>
<div class="r" style="left:713px;top:483px;width:1px;height:79px;background:#ddd3a6"></div>
<div class="r" style="left:762px;top:469px;width:1px;height:93px;background:#ddd3a6"></div>
<div class="r" style="left:818px;top:469px;width:1px;height:93px;background:#ddd3a6"></div>
<div class="r" style="left:865px;top:469px;width:1px;height:93px;background:#ddd3a6"></div>
<div class="r" style="left:922px;top:469px;width:1px;height:93px;background:#ddd3a6"></div>
<div class="r" style="left:979px;top:469px;width:1px;height:93px;background:#ddd3a6"></div>
<div class="r" style="left:1045px;top:455px;width:1px;height:107px;background:#ddd3a6"></div>
<div class="t" style="left:29px;top:455.52px;font-size:10.9px;line-height:14px;color:#4a4a4a;font-weight:normal;font-style:normal;transform:scaleX(0.9550);transform-origin:left center;">№</div>
<div class="t" style="left:29px;top:468.12px;font-size:10.9px;line-height:14px;color:#4a4a4a;font-weight:normal;font-style:normal;transform:scaleX(0.9550);transform-origin:left center;">строки</div>
<div class="t" style="left:76px;top:455.52px;font-size:10.9px;line-height:14px;color:#4a4a4a;font-weight:normal;font-style:normal;transform:scaleX(0.9550);transform-origin:left center;">Номенклатура</div>
<div class="t" style="left:162px;top:455.52px;font-size:10.9px;line-height:14px;color:#4a4a4a;font-weight:normal;font-style:normal;transform:scaleX(0.9550);transform-origin:left center;">Характерис</div>
<div class="t" style="left:162px;top:468.12px;font-size:10.9px;line-height:14px;color:#4a4a4a;font-weight:normal;font-style:normal;transform:scaleX(0.9550);transform-origin:left center;">тика</div>
<div class="t" style="left:228px;top:455.52px;font-size:10.9px;line-height:14px;color:#4a4a4a;font-weight:normal;font-style:normal;transform:scaleX(0.9550);transform-origin:left center;">Маржинальная</div>
<div class="t" style="left:228px;top:468.12px;font-size:10.9px;line-height:14px;color:#4a4a4a;font-weight:normal;font-style:normal;transform:scaleX(0.9550);transform-origin:left center;">прибыль</div>
<div class="t" style="left:317px;top:455.52px;font-size:10.9px;line-height:14px;color:#2f9a2f;font-weight:normal;font-style:normal;transform:scaleX(0.9550);transform-origin:left center;">Рентабельность,</div>
<div class="t" style="left:317px;top:468.12px;font-size:10.9px;line-height:14px;color:#2f9a2f;font-weight:normal;font-style:normal;transform:scaleX(0.9550);transform-origin:left center;">%</div>
<div class="t" style="left:413px;top:455.52px;font-size:10.9px;line-height:14px;color:#4a4a4a;font-weight:normal;font-style:normal;transform:scaleX(0.9550);transform-origin:left center;">Торговая</div>
<div class="t" style="left:413px;top:468.12px;font-size:10.9px;line-height:14px;color:#4a4a4a;font-weight:normal;font-style:normal;transform:scaleX(0.9550);transform-origin:left center;">наценка, %</div>
<div class="t" style="left:474px;top:455.52px;font-size:10.9px;line-height:14px;color:#4a4a4a;font-weight:normal;font-style:normal;transform:scaleX(0.9550);transform-origin:left center;">Расшифровка расчета</div>
<div class="t" style="left:474px;top:469.52px;font-size:10.9px;line-height:14px;color:#4a4a4a;font-weight:normal;font-style:normal;transform:scaleX(0.9550);transform-origin:left center;">Количество</div>
<div class="t" style="left:546px;top:469.52px;font-size:10.9px;line-height:14px;color:#4a4a4a;font-weight:normal;font-style:normal;transform:scaleX(0.9550);transform-origin:left center;">Цена</div>
<div class="t" style="left:592px;top:469.52px;font-size:10.9px;line-height:14px;color:#4a4a4a;font-weight:normal;font-style:normal;transform:scaleX(0.9550);transform-origin:left center;">Выручка без</div>
<div class="t" style="left:592px;top:482.12px;font-size:10.9px;line-height:14px;color:#4a4a4a;font-weight:normal;font-style:normal;transform:scaleX(0.9550);transform-origin:left center;">учета скидок</div>
<div class="t" style="left:668px;top:469.52px;font-size:10.9px;line-height:14px;color:#4a4a4a;font-weight:normal;font-style:normal;transform:scaleX(0.9550);transform-origin:left center;">Скидки</div>
<div class="t" style="left:765px;top:469.52px;font-size:10.9px;line-height:14px;color:#4a4a4a;font-weight:normal;font-style:normal;transform:scaleX(0.9550);transform-origin:left center;">Выручка</div>
<div class="t" style="left:821px;top:469.52px;font-size:10.9px;line-height:14px;color:#4a4a4a;font-weight:normal;font-style:normal;transform:scaleX(0.9550);transform-origin:left center;">НДС</div>
<div class="t" style="left:868px;top:469.52px;font-size:10.9px;line-height:14px;color:#4a4a4a;font-weight:normal;font-style:normal;transform:scaleX(0.9550);transform-origin:left center;">Выручка с</div>
<div class="t" style="left:868px;top:482.12px;font-size:10.9px;line-height:14px;color:#4a4a4a;font-weight:normal;font-style:normal;transform:scaleX(0.9550);transform-origin:left center;">НДС</div>
<div class="t" style="left:925px;top:469.52px;font-size:10.9px;line-height:14px;color:#4a4a4a;font-weight:normal;font-style:normal;transform:scaleX(0.9550);transform-origin:left center;">Выручка</div>
<div class="t" style="left:925px;top:482.12px;font-size:10.9px;line-height:14px;color:#4a4a4a;font-weight:normal;font-style:normal;transform:scaleX(0.9550);transform-origin:left center;">без НДС</div>
<div class="t" style="left:982px;top:469.52px;font-size:10.9px;line-height:14px;color:#4a4a4a;font-weight:normal;font-style:normal;transform:scaleX(0.9550);transform-origin:left center;">Стоимость</div>
<div class="t" style="left:668px;top:483.52px;font-size:10.9px;line-height:14px;color:#4a4a4a;font-weight:normal;font-style:normal;transform:scaleX(0.9550);transform-origin:left center;">%</div>
<div class="t" style="left:668px;top:496.12px;font-size:10.9px;line-height:14px;color:#4a4a4a;font-weight:normal;font-style:normal;transform:scaleX(0.9550);transform-origin:left center;">скидок</div>
<div class="t" style="left:716px;top:483.52px;font-size:10.9px;line-height:14px;color:#4a4a4a;font-weight:normal;font-style:normal;transform:scaleX(0.9550);transform-origin:left center;">Всего</div>
<div class="t" style="left:716px;top:496.12px;font-size:10.9px;line-height:14px;color:#4a4a4a;font-weight:normal;font-style:normal;transform:scaleX(0.9550);transform-origin:left center;">скидок</div>
<div class="t" style="right:981px;top:510.00px;font-size:10.4px;line-height:14px;color:#4a4a4a;font-weight:normal;font-style:normal;text-align:right;transform:scaleX(0.9050);transform-origin:right center;">3</div>
<div class="t" style="left:76px;top:510.00px;font-size:10.4px;line-height:14px;color:#4a4a4a;font-weight:normal;font-style:normal;transform:scaleX(0.9050);transform-origin:left center;">Булочка с маком</div>
<div class="t" style="right:740px;top:510.00px;font-size:10.4px;line-height:14px;color:#4a4a4a;font-weight:normal;font-style:normal;text-align:right;transform:scaleX(0.9050);transform-origin:right center;">220,00</div>
<div class="t" style="right:644px;top:510.00px;font-size:10.4px;line-height:14px;color:#2f9a2f;font-weight:normal;font-style:normal;text-align:right;transform:scaleX(0.9050);transform-origin:right center;">30,56</div>
<div class="t" style="right:583px;top:510.00px;font-size:10.4px;line-height:14px;color:#4a4a4a;font-weight:normal;font-style:normal;text-align:right;transform:scaleX(0.9050);transform-origin:right center;">44,00</div>
<div class="t" style="right:511px;top:510.00px;font-size:10.4px;line-height:14px;color:#4a4a4a;font-weight:normal;font-style:normal;text-align:right;transform:scaleX(0.9050);transform-origin:right center;">1,000</div>
<div class="t" style="right:465px;top:510.00px;font-size:10.4px;line-height:14px;color:#4a4a4a;font-weight:normal;font-style:normal;text-align:right;transform:scaleX(0.9050);transform-origin:right center;">600,00</div>
<div class="t" style="right:389px;top:510.00px;font-size:10.4px;line-height:14px;color:#4a4a4a;font-weight:normal;font-style:normal;text-align:right;transform:scaleX(0.9050);transform-origin:right center;">600,00</div>
<div class="t" style="right:236px;top:510.00px;font-size:10.4px;line-height:14px;color:#4a4a4a;font-weight:normal;font-style:normal;text-align:right;transform:scaleX(0.9050);transform-origin:right center;">600,00</div>
<div class="t" style="right:189px;top:510.00px;font-size:10.4px;line-height:14px;color:#4a4a4a;font-weight:normal;font-style:normal;text-align:right;transform:scaleX(0.9050);transform-origin:right center;">120,00</div>
<div class="t" style="right:132px;top:510.00px;font-size:10.4px;line-height:14px;color:#4a4a4a;font-weight:normal;font-style:normal;text-align:right;transform:scaleX(0.9050);transform-origin:right center;">720,00</div>
<div class="t" style="right:75px;top:510.00px;font-size:10.4px;line-height:14px;color:#4a4a4a;font-weight:normal;font-style:normal;text-align:right;transform:scaleX(0.9050);transform-origin:right center;">600,00</div>
<div class="t" style="right:9px;top:510.00px;font-size:10.4px;line-height:14px;color:#4a4a4a;font-weight:normal;font-style:normal;text-align:right;transform:scaleX(0.9050);transform-origin:right center;">500,00</div>
<div class="t" style="right:981px;top:523.00px;font-size:10.4px;line-height:14px;color:#4a4a4a;font-weight:normal;font-style:normal;text-align:right;transform:scaleX(0.9050);transform-origin:right center;">1</div>
<div class="t" style="left:76px;top:523.00px;font-size:10.4px;line-height:14px;color:#4a4a4a;font-weight:normal;font-style:normal;transform:scaleX(0.9050);transform-origin:left center;">Белок</div>
<div class="t" style="right:740px;top:523.00px;font-size:10.4px;line-height:14px;color:#4a4a4a;font-weight:normal;font-style:normal;text-align:right;transform:scaleX(0.9050);transform-origin:right center;">40,00</div>
<div class="t" style="right:644px;top:523.00px;font-size:10.4px;line-height:14px;color:#2f9a2f;font-weight:normal;font-style:normal;text-align:right;transform:scaleX(0.9050);transform-origin:right center;">16,67</div>
<div class="t" style="right:583px;top:523.00px;font-size:10.4px;line-height:14px;color:#4a4a4a;font-weight:normal;font-style:normal;text-align:right;transform:scaleX(0.9050);transform-origin:right center;">20,00</div>
<div class="t" style="right:511px;top:523.00px;font-size:10.4px;line-height:14px;color:#4a4a4a;font-weight:normal;font-style:normal;text-align:right;transform:scaleX(0.9050);transform-origin:right center;">1,000</div>
<div class="t" style="right:465px;top:523.00px;font-size:10.4px;line-height:14px;color:#4a4a4a;font-weight:normal;font-style:normal;text-align:right;transform:scaleX(0.9050);transform-origin:right center;">200,00</div>
<div class="t" style="right:389px;top:523.00px;font-size:10.4px;line-height:14px;color:#4a4a4a;font-weight:normal;font-style:normal;text-align:right;transform:scaleX(0.9050);transform-origin:right center;">200,00</div>
<div class="t" style="right:236px;top:523.00px;font-size:10.4px;line-height:14px;color:#4a4a4a;font-weight:normal;font-style:normal;text-align:right;transform:scaleX(0.9050);transform-origin:right center;">200,00</div>
<div class="t" style="right:189px;top:523.00px;font-size:10.4px;line-height:14px;color:#4a4a4a;font-weight:normal;font-style:normal;text-align:right;transform:scaleX(0.9050);transform-origin:right center;">40,00</div>
<div class="t" style="right:132px;top:523.00px;font-size:10.4px;line-height:14px;color:#4a4a4a;font-weight:normal;font-style:normal;text-align:right;transform:scaleX(0.9050);transform-origin:right center;">240,00</div>
<div class="t" style="right:75px;top:523.00px;font-size:10.4px;line-height:14px;color:#4a4a4a;font-weight:normal;font-style:normal;text-align:right;transform:scaleX(0.9050);transform-origin:right center;">200,00</div>
<div class="t" style="right:9px;top:523.00px;font-size:10.4px;line-height:14px;color:#4a4a4a;font-weight:normal;font-style:normal;text-align:right;transform:scaleX(0.9050);transform-origin:right center;">200,00</div>
<div class="t" style="right:981px;top:536.00px;font-size:10.4px;line-height:14px;color:#4a4a4a;font-weight:normal;font-style:normal;text-align:right;transform:scaleX(0.9050);transform-origin:right center;">2</div>
<div class="t" style="left:76px;top:536.00px;font-size:10.4px;line-height:14px;color:#4a4a4a;font-weight:normal;font-style:normal;transform:scaleX(0.9050);transform-origin:left center;">Ступка</div>
<div class="t" style="right:740px;top:536.00px;font-size:10.4px;line-height:14px;color:#4a4a4a;font-weight:normal;font-style:normal;text-align:right;transform:scaleX(0.9050);transform-origin:right center;">40,00</div>
<div class="t" style="right:644px;top:536.00px;font-size:10.4px;line-height:14px;color:#2f9a2f;font-weight:normal;font-style:normal;text-align:right;transform:scaleX(0.9050);transform-origin:right center;">16,67</div>
<div class="t" style="right:583px;top:536.00px;font-size:10.4px;line-height:14px;color:#4a4a4a;font-weight:normal;font-style:normal;text-align:right;transform:scaleX(0.9050);transform-origin:right center;">20,00</div>
<div class="t" style="right:511px;top:536.00px;font-size:10.4px;line-height:14px;color:#4a4a4a;font-weight:normal;font-style:normal;text-align:right;transform:scaleX(0.9050);transform-origin:right center;">1,000</div>
<div class="t" style="right:465px;top:536.00px;font-size:10.4px;line-height:14px;color:#4a4a4a;font-weight:normal;font-style:normal;text-align:right;transform:scaleX(0.9050);transform-origin:right center;">200,00</div>
<div class="t" style="right:389px;top:536.00px;font-size:10.4px;line-height:14px;color:#4a4a4a;font-weight:normal;font-style:normal;text-align:right;transform:scaleX(0.9050);transform-origin:right center;">200,00</div>
<div class="t" style="right:236px;top:536.00px;font-size:10.4px;line-height:14px;color:#4a4a4a;font-weight:normal;font-style:normal;text-align:right;transform:scaleX(0.9050);transform-origin:right center;">200,00</div>
<div class="t" style="right:189px;top:536.00px;font-size:10.4px;line-height:14px;color:#4a4a4a;font-weight:normal;font-style:normal;text-align:right;transform:scaleX(0.9050);transform-origin:right center;">40,00</div>
<div class="t" style="right:132px;top:536.00px;font-size:10.4px;line-height:14px;color:#4a4a4a;font-weight:normal;font-style:normal;text-align:right;transform:scaleX(0.9050);transform-origin:right center;">240,00</div>
<div class="t" style="right:75px;top:536.00px;font-size:10.4px;line-height:14px;color:#4a4a4a;font-weight:normal;font-style:normal;text-align:right;transform:scaleX(0.9050);transform-origin:right center;">200,00</div>
<div class="t" style="right:9px;top:536.00px;font-size:10.4px;line-height:14px;color:#4a4a4a;font-weight:normal;font-style:normal;text-align:right;transform:scaleX(0.9050);transform-origin:right center;">200,00</div>
<div class="t" style="left:29px;top:547.62px;font-size:11.2px;line-height:15px;color:#4a4a4a;font-weight:normal;font-style:normal;transform:scaleX(0.9500);transform-origin:left center;">Итого</div>
<div class="t" style="right:740px;top:547.62px;font-size:11.2px;line-height:15px;color:#4a4a4a;font-weight:normal;font-style:normal;text-align:right;transform:scaleX(0.9500);transform-origin:right center;">300,00</div>
<div class="t" style="right:644px;top:547.62px;font-size:11.2px;line-height:15px;color:#2f9a2f;font-weight:normal;font-style:normal;text-align:right;transform:scaleX(0.9500);transform-origin:right center;">25,00</div>
<div class="t" style="right:583px;top:547.62px;font-size:11.2px;line-height:15px;color:#4a4a4a;font-weight:normal;font-style:normal;text-align:right;transform:scaleX(0.9500);transform-origin:right center;">33,33</div>
<div class="t" style="right:389px;top:547.62px;font-size:11.2px;line-height:15px;color:#4a4a4a;font-weight:normal;font-style:normal;text-align:right;transform:scaleX(0.9500);transform-origin:right center;">1 000,00</div>
<div class="t" style="right:236px;top:547.62px;font-size:11.2px;line-height:15px;color:#4a4a4a;font-weight:normal;font-style:normal;text-align:right;transform:scaleX(0.9500);transform-origin:right center;">1 000,00</div>
<div class="t" style="right:189px;top:547.62px;font-size:11.2px;line-height:15px;color:#4a4a4a;font-weight:normal;font-style:normal;text-align:right;transform:scaleX(0.9500);transform-origin:right center;">200,00</div>
<div class="t" style="right:132px;top:547.62px;font-size:11.2px;line-height:15px;color:#4a4a4a;font-weight:normal;font-style:normal;text-align:right;transform:scaleX(0.9500);transform-origin:right center;">1 200,00</div>
<div class="t" style="right:75px;top:547.62px;font-size:11.2px;line-height:15px;color:#4a4a4a;font-weight:normal;font-style:normal;text-align:right;transform:scaleX(0.9500);transform-origin:right center;">1 000,00</div>
<div class="t" style="right:9px;top:547.62px;font-size:11.2px;line-height:15px;color:#4a4a4a;font-weight:normal;font-style:normal;text-align:right;transform:scaleX(0.9500);transform-origin:right center;">900,00</div>
<div class="r" style="left:26px;top:86px;width:1px;height:478px;background:#cdcdcd"></div>
<div class="r" style="left:26px;top:356px;width:432px;height:17px;border:2px solid #ff0000;box-sizing:border-box"></div>
<div class="r" style="left:978px;top:467px;width:70px;height:97px;border:2px solid #ff0000;box-sizing:border-box"></div>
</body></html>
